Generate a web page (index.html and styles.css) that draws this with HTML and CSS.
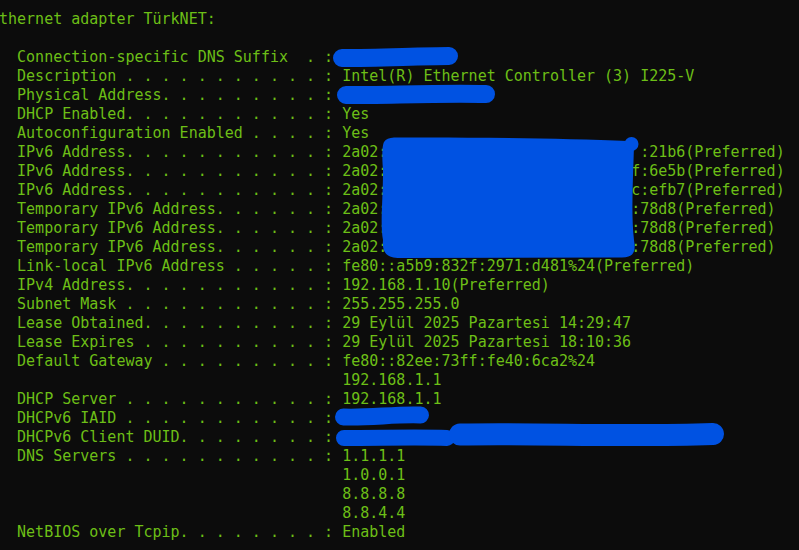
FILE: index.html
```html
<!DOCTYPE html>
<html lang="en">
<head>
<meta charset="utf-8">
<title>ipconfig /all</title>
<link rel="stylesheet" href="styles.css">
</head>
<body>
<div class="screen">
<pre class="term">thernet adapter TürkNET:

  Connection-specific DNS Suffix  . : 
  Description . . . . . . . . . . . : Intel(R) Ethernet Controller (3) I225-V
  Physical Address. . . . . . . . . : 
  DHCP Enabled. . . . . . . . . . . : Yes
  Autoconfiguration Enabled . . . . : Yes
  IPv6 Address. . . . . . . . . . . : 2a02:                            :21b6(Preferred)
  IPv6 Address. . . . . . . . . . . : 2a02:                           f:6e5b(Preferred)
  IPv6 Address. . . . . . . . . . . : 2a02:                           c:efb7(Preferred)
  Temporary IPv6 Address. . . . . . : 2a02:                           :78d8(Preferred)
  Temporary IPv6 Address. . . . . . : 2a02:                           :78d8(Preferred)
  Temporary IPv6 Address. . . . . . : 2a02:                           :78d8(Preferred)
  Link-local IPv6 Address . . . . . : fe80::a5b9:832f:2971:d481%24(Preferred)
  IPv4 Address. . . . . . . . . . . : 192.168.1.10(Preferred)
  Subnet Mask . . . . . . . . . . . : 255.255.255.0
  Lease Obtained. . . . . . . . . . : 29 Eylül 2025 Pazartesi 14:29:47
  Lease Expires . . . . . . . . . . : 29 Eylül 2025 Pazartesi 18:10:36
  Default Gateway . . . . . . . . . : fe80::82ee:73ff:fe40:6ca2%24
                                      192.168.1.1
  DHCP Server . . . . . . . . . . . : 192.168.1.1
  DHCPv6 IAID . . . . . . . . . . . : 
  DHCPv6 Client DUID. . . . . . . . : 
  DNS Servers . . . . . . . . . . . : 1.1.1.1
                                      1.0.0.1
                                      8.8.8.8
                                      8.8.4.4
  NetBIOS over Tcpip. . . . . . . . : Enabled</pre>
<svg class="redact" width="799" height="550" viewBox="0 0 799 550" aria-hidden="true">
  <g fill="none" stroke="#0052e2" stroke-linecap="round" stroke-linejoin="round">
    <path d="M342 58 C380 58, 420 56, 449 56" stroke-width="18"/>
    <path d="M346 95 C390 95, 440 93, 486 94" stroke-width="18"/>
    <path d="M343.5 417 C370 418, 395 414, 420.5 415" stroke-width="17"/>
    <path d="M344 438 C380 438, 420 437, 447 438" stroke-width="16"/>
    <path d="M460 434.5 C540 433, 620 437, 713 434" stroke-width="22"/>
  </g>
  <g fill="#0052e2">
    <path d="M394 137.5 C460 137, 560 138, 628 141 L634 146 C633 180, 631 215, 634 240 C636 251, 634 257.5, 622 257.5 L400 258 C386 258, 382 252, 383 240 C380 225, 383 200, 383 170 C382 158, 382 146, 384 142 C386 139, 389 137.8, 394 137.5 Z"/>
    <circle cx="631.5" cy="144" r="7"/>
  </g>
</svg>
</div>
</body>
</html>
```

FILE: styles.css
```css
html, body {
  margin: 0;
  padding: 0;
  background: #0c0c0c;
}

body {
  width: 799px;
  height: 550px;
  overflow: hidden;
}

.screen {
  position: relative;
  width: 799px;
  height: 550px;
  background: #0c0c0c;
}

.term {
  margin: 0 0 0 -1px;
  padding: 10px 0 0 0;
  font-family: "DejaVu Sans Mono", "Liberation Mono", monospace;
  font-size: 15px;
  line-height: 19px;
  color: #6cbf17;
  white-space: pre;
}

.redact {
  position: absolute;
  top: 0;
  left: 0;
}
```
